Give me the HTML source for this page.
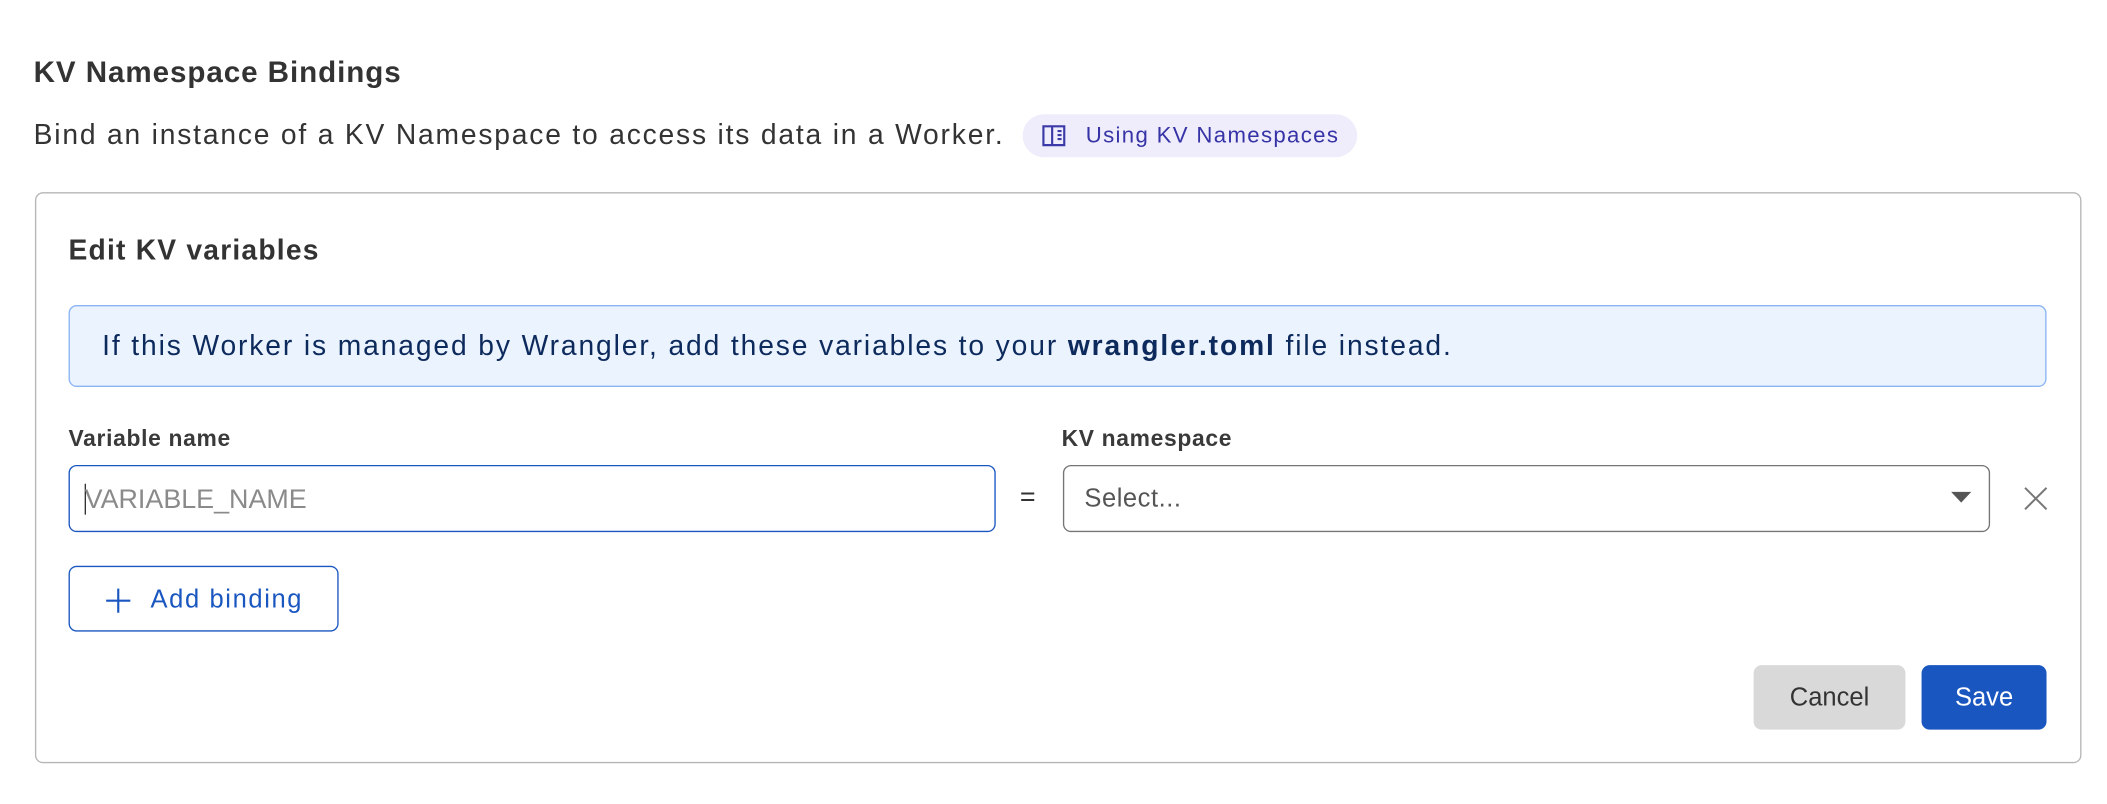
<!DOCTYPE html>
<html><head><meta charset="utf-8"><style>
html,body{margin:0;padding:0;background:#fff;width:2107px;height:804px;overflow:hidden}
#w{position:absolute;left:0;top:0;width:1568px;height:598px;transform:scale(1.34375);transform-origin:0 0;font-family:"Liberation Sans",Arial,sans-serif;color:#313131}
.a{position:absolute;white-space:nowrap}
</style></head><body><div id="w">
<div class="a" style="left:25px;top:41px;font-size:22px;letter-spacing:0.7px;font-weight:bold;color:#333">KV Namespace Bindings</div>
<div class="a" style="left:25px;top:89px;font-size:21px;letter-spacing:1.35px;color:#333">Bind an instance of a KV Namespace to access its data in a Worker.</div>
<div class="a" style="left:761px;top:85px;width:249px;height:32px;border-radius:16px;background:#efedfb"></div>
<svg class="a" style="left:775px;top:92px" width="20" height="18" viewBox="0 0 20 18"><path d="M1.5 2h6.5v14H1.5z M8 2h9v14H8 M12 5.5h3M12 8.5h3M12 11.5h3" fill="none" stroke="#3b3aa8" stroke-width="1.6"/></svg>
<div class="a" style="left:808px;top:92px;font-size:16.5px;letter-spacing:1px;color:#3633a6">Using KV Namespaces</div>
<div class="a" style="left:26px;top:143px;width:1521px;height:423px;border:1px solid #b6b6b6;border-radius:6px"></div>
<div class="a" style="left:51px;top:175px;font-size:21px;letter-spacing:0.9px;font-weight:bold;color:#333">Edit KV variables</div>
<div class="a" style="left:51px;top:227px;width:1470px;height:59px;border:1px solid #8ab4f3;border-radius:6px;background:#ebf3fe"></div>
<div class="a" style="left:76px;top:246px;font-size:21px;letter-spacing:1.4px;color:#0d2a5c">If this Worker is managed by Wrangler, add these variables to your <b>wrangler.toml</b> file instead.</div>
<div class="a" style="left:51px;top:317px;font-size:17px;letter-spacing:0.5px;font-weight:bold;color:#3a3a3a">Variable name</div>
<div class="a" style="left:790px;top:317px;font-size:17px;letter-spacing:0.5px;font-weight:bold;color:#3a3a3a">KV namespace</div>
<div class="a" style="left:51px;top:346px;width:688px;height:48px;border:1.5px solid #1a56c0;border-radius:6px"></div>
<div class="a" style="left:63px;top:360px;width:1px;height:23px;background:#333"></div>
<div class="a" style="left:63px;top:361px;font-size:20px;color:#8a8a8a">VARIABLE_NAME</div>
<div class="a" style="left:759px;top:359px;font-size:20px;color:#333">=</div>
<div class="a" style="left:791px;top:346px;width:688px;height:48px;border:1.5px solid #757575;border-radius:6px"></div>
<div class="a" style="left:807px;top:361px;font-size:19px;letter-spacing:0.4px;color:#555">Select...</div>
<svg class="a" style="left:1452px;top:365px" width="15" height="10"><path d="M0 1h15L7.5 9z" fill="#555"/></svg>
<svg class="a" style="left:1505px;top:361px" width="20" height="20"><path d="M2 2L18 18M18 2L2 18" stroke="#777" stroke-width="1.5"/></svg>
<div class="a" style="left:51px;top:421px;width:199px;height:47px;border:1px solid #1a56c0;border-radius:6px"></div>
<svg class="a" style="left:78px;top:437px" width="20" height="20"><path d="M10 1v18M1 10h18" stroke="#1a56c0" stroke-width="1.6"/></svg>
<div class="a" style="left:112px;top:436px;font-size:19px;letter-spacing:1.2px;color:#1a56c0">Add binding</div>
<div class="a" style="left:1305px;top:495px;width:113px;height:48px;border-radius:6px;background:#d9d9d9;font-size:19px;color:#333;text-align:center;line-height:50px">Cancel</div>
<div class="a" style="left:1430px;top:495px;width:93px;height:48px;border-radius:6px;background:#1a56c0;font-size:19px;color:#fff;text-align:center;line-height:50px">Save</div>
</div></body></html>
